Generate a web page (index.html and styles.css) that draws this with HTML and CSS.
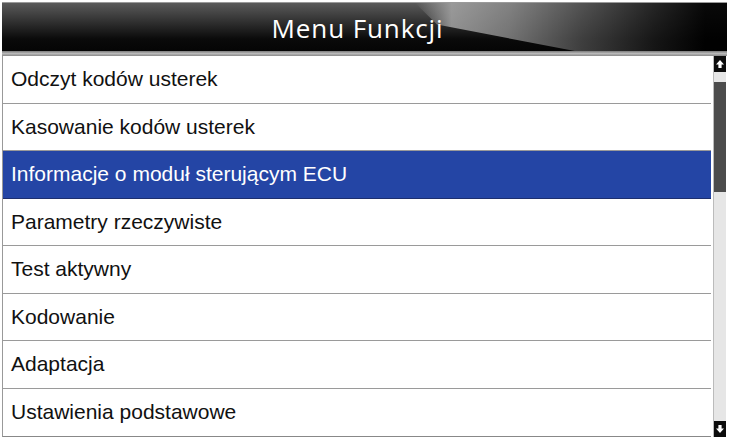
FILE: index.html
```html
<!DOCTYPE html>
<html>
<head>
<meta charset="utf-8">
<link rel="stylesheet" href="styles.css">
</head>
<body>
<div class="screen">
  <div class="header">
    <span class="title">Menu Funkcji</span>
  </div>
  <div class="band"></div>
  <div class="body">
    <ul class="list">
      <li class="row">Odczyt kodów usterek</li>
      <li class="row">Kasowanie kodów usterek</li>
      <li class="row selected">Informacje o moduł sterującym ECU</li>
      <li class="row">Parametry rzeczywiste</li>
      <li class="row">Test aktywny</li>
      <li class="row">Kodowanie</li>
      <li class="row">Adaptacja</li>
      <li class="row">Ustawienia podstawowe</li>
    </ul>
    <div class="scrollbar">
      <div class="btn">
        <svg width="10" height="10" viewBox="0 0 10 10"><path d="M5 1 L9 5.5 L6.6 5.5 L6.6 9 L3.4 9 L3.4 5.5 L1 5.5 Z" fill="#fff"/></svg>
      </div>
      <div class="track">
        <div class="gap"></div>
        <div class="thumb"></div>
      </div>
      <div class="btn">
        <svg width="10" height="10" viewBox="0 0 10 10"><path d="M5 9 L9 4.5 L6.6 4.5 L6.6 1 L3.4 1 L3.4 4.5 L1 4.5 Z" fill="#fff"/></svg>
      </div>
    </div>
  </div>
</div>
</body>
</html>
```
FILE: styles.css
```css
html, body {
  margin: 0;
  padding: 0;
  background: #fff;
}
.screen {
  width: 725px;
  margin: 2px 0 0 2px;
  display: flex;
  flex-direction: column;
}
.header {
  position: relative;
  height: 48px;
  border-top: 1px solid #9a9a9a;
  background: linear-gradient(to bottom, #5a5a5a 0%, #2a2a2a 45%, #0a0a0a 75%, #050505 100%);
  display: flex;
  align-items: center;
  justify-content: center;
  overflow: hidden;
}
.header::before {
  content: "";
  position: absolute;
  left: 0;
  top: 0;
  right: 0;
  bottom: 0;
  background: linear-gradient(to right, rgba(0,0,0,0) 0%, rgba(0,0,0,0) 57%, rgba(165,165,165,0.85) 62%, rgba(140,140,140,0.8) 70%, rgba(80,80,80,0.75) 80%, rgba(25,25,25,0.8) 90%, rgba(0,0,0,0.9) 97%);
  clip-path: polygon(57% 0%, 60% 45%, 79% 100%, 100% 100%, 100% 0%);
}
.title {
  position: relative;
  font-family: "Open Sans", sans-serif;
  font-size: 26px;
  color: #fff;
  letter-spacing: 0.9px;
  margin-top: 2px;
  margin-right: 14px;
}
.band {
  height: 5px;
  background: linear-gradient(to bottom, #7a7a7a, #b8b8b8 50%, #8a8a8a);
}
.body {
  display: flex;
  height: 381px;
}
.list {
  list-style: none;
  margin: 0;
  padding: 0;
  width: 708px;
  border-left: 1px solid #999;
  border-bottom: 1px solid #888;
  display: flex;
  flex-direction: column;
}
.row {
  box-sizing: border-box;
  height: 47.5px;
  border-bottom: 1px solid #9a9a9a;
  padding-left: 8px;
  display: flex;
  align-items: center;
  font-family: "Liberation Sans", Arial, sans-serif;
  font-size: 21px;
  color: #111;
}
.row:last-child {
  border-bottom: none;
}
.row.selected {
  background: #2445a5;
  color: #fff;
  border-bottom-color: #1d2f6e;
}
.scrollbar {
  width: 12px;
  margin-left: 2px;
  display: flex;
  flex-direction: column;
  background: #e6e6e6;
  border-left: 1px solid #bbb;
}
.btn {
  height: 16px;
  background: #0c0c0c;
  display: flex;
  align-items: center;
  justify-content: center;
}
.track {
  flex: 1;
  display: flex;
  flex-direction: column;
}
.gap {
  height: 10px;
}
.thumb {
  height: 110px;
  background: #4c4c4c;
}
```
